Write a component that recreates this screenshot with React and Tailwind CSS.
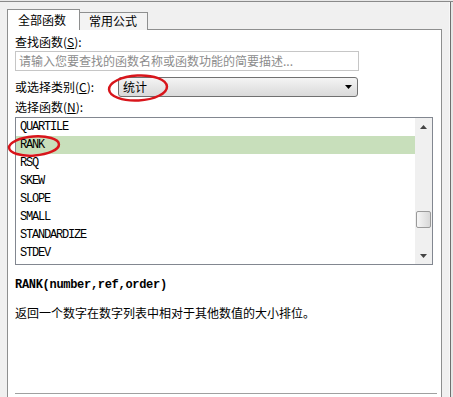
import React from 'react';

const cjk = 'font-["Noto_Sans_CJK_SC",sans-serif]';
const mono = 'font-["Liberation_Mono","Noto_Sans_CJK_SC",monospace]';

const functions = ['QUARTILE', 'RANK', 'RSQ', 'SKEW', 'SLOPE', 'SMALL', 'STANDARDIZE', 'STDEV'];

const Label = ({ text, hotkey }) => (
  <span className="text-[12px] leading-[16px] text-black">
    {text}(<span className="underline">{hotkey}</span>):
  </span>
);

export default function App() {
  return (
    <div className={`relative w-[453px] h-[397px] overflow-hidden bg-[#f0f0f0] text-[12px] leading-[16px] ${cjk}`}>
      {/* top edge */}
      <div className="h-[1px] bg-[#e8e8e8]" />
      <div className="h-[1px] bg-[#8a8a8a]" />

      <div className="flex h-[395px]">
        <div className="w-[449px] pl-[7px] pt-[7px] flex flex-col">
          {/* Tabs */}
          <div className="flex items-end h-[21px] relative z-10">
            <div className="w-[73px] h-[21px] bg-white border border-b-0 border-[#8e8f8f] pl-[10px] pt-[2px] text-black">
              全部函数
            </div>
            <div className="w-[68px] h-[18px] bg-[#f3f3f3] border border-l-0 border-b-0 border-[#8e8f8f] pl-[9px] text-black">
              常用公式
            </div>
          </div>

          {/* Panel */}
          <div className="w-[435px] flex-1 -mt-[1px] bg-white border border-b-0 border-[#8e8f8f] pl-[7px] pt-[4px] flex flex-col">
            <div className="h-[16px]">
              <Label text="查找函数" hotkey="S" />
            </div>
            <div className="mt-[1px] w-[344px] h-[20px] border border-[#c6c6c6] bg-white pl-[3px] leading-[18px] text-[#8c8c8c] whitespace-nowrap overflow-hidden">
              请输入您要查找的函数名称或函数功能的简要描述...
            </div>

            <div className="mt-[6px] flex items-center h-[20px]">
              <div className="w-[103px] h-[16px]">
                <Label text="或选择类别" hotkey="C" />
              </div>
              <div className="w-[240px] h-[20px] rounded-[3px] border border-[#707070] bg-gradient-to-b from-[#f4f4f4] to-[#dadada] flex items-center justify-between pl-[4px] pr-[5px]">
                <span className="text-black">统计</span>
                <svg width="7" height="4" viewBox="0 0 7 4">
                  <path d="M0 0H7L3.5 4Z" fill="#000" />
                </svg>
              </div>
            </div>

            <div className="mt-[2px] h-[16px]">
              <Label text="选择函数" hotkey="N" />
            </div>

            {/* Function list */}
            <div className="mt-[2px] w-[418px] h-[148px] border border-[#828790] flex">
              <div className="flex-1">
                {functions.map((fn) => (
                  <div
                    key={fn}
                    className={`h-[18px] pl-[4px] flex items-center tracking-[-1.2px] text-black ${mono} ${fn === 'RANK' ? 'bg-[#c8dfbb]' : ''}`}
                  >
                    {fn}
                  </div>
                ))}
              </div>
              <div className="w-[17px] bg-[#f0f0f0] flex flex-col items-center">
                <div className="h-[17px] flex items-center justify-center">
                  <svg width="7" height="4" viewBox="0 0 7 4">
                    <path d="M0 4H7L3.5 0Z" fill="#444" />
                  </svg>
                </div>
                <div className="flex-1 w-full flex flex-col justify-end pb-[19px]">
                  <div className="mx-[1px] h-[17px] rounded-[2px] border border-[#9a9a9a] bg-gradient-to-r from-[#f6f6f6] to-[#d8d8d8]" />
                </div>
                <div className="h-[17px] flex items-center justify-center">
                  <svg width="7" height="4" viewBox="0 0 7 4">
                    <path d="M0 0H7L3.5 4Z" fill="#444" />
                  </svg>
                </div>
              </div>
            </div>

            <div className={`mt-[12px] h-[16px] font-bold tracking-[-0.3px] text-black ${mono}`}>
              RANK(number,ref,order)
            </div>
            <div className="mt-[12px] h-[16px] text-black">
              返回一个数字在数字列表中相对于其他数值的大小排位。
            </div>

            <div className="mt-auto mb-[3px] mr-[4px] border-t border-[#a0a0a0]" />
          </div>
        </div>
        <div className="w-[1px] bg-[#f8f8f8]" />
        <div className="w-[1px] bg-[#6f6f6f]" />
        <div className="w-[2px] bg-[#e6e6e6]" />
      </div>

      {/* red hand-drawn circles */}
      <svg className="absolute inset-0 pointer-events-none" width="453" height="397">
        <ellipse cx="138" cy="88" rx="29" ry="12.5" fill="none" stroke="#d8151b" strokeWidth="2.5" transform="rotate(-3 138 88)" />
        <ellipse cx="34" cy="146" rx="25" ry="9.5" fill="none" stroke="#d8151b" strokeWidth="2.5" transform="rotate(-4 34 146)" />
      </svg>
    </div>
  );
}
